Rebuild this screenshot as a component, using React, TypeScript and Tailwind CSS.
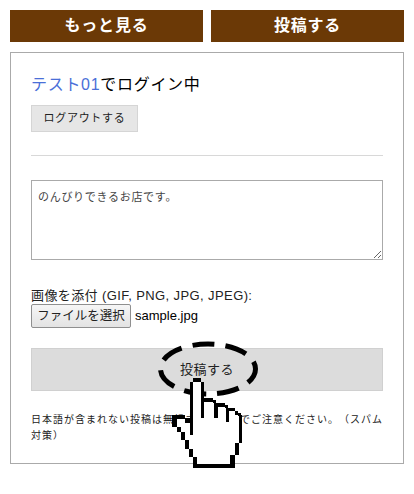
const cjk = "font-['Liberation_Sans','Noto_Sans_CJK_JP',sans-serif]";

function Hand() {
  return (
    <svg
      className="absolute left-[172px] top-[378px]"
      width="72"
      height="92"
      viewBox="0 0 72 92"
      shapeRendering="crispEdges"
    >
      <path
        d="M19 4H30V20H42V25H54V30H64V36H68V65H64V77H60V88H23V79H19V71H15V62H11V54H7V49H3V40H13V44H19Z"
        fill="#fff"
      />
      <path
        d="M21 0h8v4h-8zM18 4h3v53h-3zM29 4h3v36h-3zM32 20h9v4h-9zM41 22h3v3h-3zM42 25h4v15h-4zM46 25h7v4h-7zM53 27h3v3h-3zM54 30h3v14h-3zM57 30h6v3h-6zM63 33h3v4h-3zM66 35h3v3h-3zM67 37h3v28h-3zM63 65h4v12h-4zM58 77h5v13h-5zM21 86h42v4H21zM21 79h4v11h-4zM17 71h4v8h-4zM13 62h4v9h-4zM9 54h4v8H9zM5 49h4v5H5zM0 40h5v9H0zM0 37h13v4H0zM13 40h5v5h-5z"
        fill="#000"
      />
    </svg>
  );
}

export default function App() {
  return (
    <div className={`relative h-[494px] w-[414px] overflow-hidden bg-white text-black ${cjk}`}>
      <div className="flex gap-2 px-2.5 pt-2.5">
        <a className="flex h-8 flex-1 items-center justify-center bg-[#6b3906] text-base font-bold tracking-[0.8px] text-white">もっと見る</a>
        <a className="flex h-8 flex-1 items-center justify-center bg-[#6b3906] text-base font-bold tracking-[0.8px] text-white">投稿する</a>
      </div>

      <div className="mx-2.5 mt-2.5 h-[412px] border border-[#aaaaaa] px-5 pt-5">
        <p className="text-base leading-6 tracking-[0.7px]">
          <span className="text-[#4a6fd8]">テスト01</span>でログイン中
        </p>
        <button className="mt-2 block h-[27px] w-[107px] border border-[#d5d5d5] bg-[#e6e6e6] text-[11px] tracking-[0.7px] text-[#222222]">
          ログアウトする
        </button>
        <hr className="mt-[23px] border-[#d8d8d8]" />

        <textarea
          className="mt-6 block h-[80px] w-[352px] resize-y border border-[#aaaaaa] px-1.5 py-2 text-[11px] tracking-[0.7px] text-[#444444]"
          defaultValue="のんびりできるお店です。"
        />

        <label className="mt-7 block text-[13px] leading-4 tracking-[0.4px] text-[#222222]">
          画像を添付 (GIF, PNG, JPG, JPEG):
        </label>
        <div className="flex items-center gap-1">
          <button className="h-[24px] w-[100px] rounded-[2px] border border-[#8f8f8f] bg-gradient-to-b from-[#f6f6f6] to-[#e3e3e3] text-[12.5px] text-[#222222]">
            ファイルを選択
          </button>
          <span className="text-[13px]">sample.jpg</span>
        </div>

        <button className="mt-5 block h-[43px] w-[352px] border border-[#d0d0d0] bg-[#dcdcdc] text-[13px] tracking-[0.5px] text-[#222222]">
          投稿する
        </button>
        <p className="mt-[21px] text-[10px] leading-4 tracking-[1px] text-[#222222] [text-spacing-trim:space-all]">
          日本語が含まれない投稿は無視されますのでご注意ください。（スパム対策）
        </p>
      </div>

      <svg className="absolute left-[156px] top-[341px]" width="104" height="56" viewBox="0 0 104 56">
        <ellipse cx="52" cy="28" rx="47.5" ry="25" fill="none" stroke="#000" strokeWidth="5" strokeDasharray="22 11" strokeDashoffset="6" />
      </svg>
      <Hand />
    </div>
  );
}
